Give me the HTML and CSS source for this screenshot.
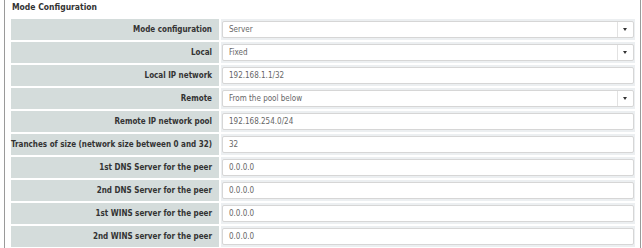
FILE: index.html
```html
<!DOCTYPE html>
<html lang="en">

<head>
    <meta charset="UTF-8">
    <title>Mode Configuration</title>
    <link rel="stylesheet" href="styles.css">
</head>

<body>
    <div class="panel">
        <h3>Mode Configuration</h3>
        <table class="config">
            <tr>
                <th>Mode configuration</th>
                <td><div class="select"><span>Server</span><b class="caret"></b></div></td>
            </tr>
            <tr>
                <th>Local</th>
                <td><div class="select"><span>Fixed</span><b class="caret"></b></div></td>
            </tr>
            <tr>
                <th>Local IP network</th>
                <td><div class="field">192.168.1.1/32</div></td>
            </tr>
            <tr>
                <th>Remote</th>
                <td><div class="select"><span>From the pool below</span><b class="caret"></b></div></td>
            </tr>
            <tr>
                <th>Remote IP network pool</th>
                <td><div class="field">192.168.254.0/24</div></td>
            </tr>
            <tr>
                <th>Tranches of size (network size between 0 and 32)</th>
                <td><div class="field">32</div></td>
            </tr>
            <tr>
                <th>1st DNS Server for the peer</th>
                <td><div class="field">0.0.0.0</div></td>
            </tr>
            <tr>
                <th>2nd DNS Server for the peer</th>
                <td><div class="field">0.0.0.0</div></td>
            </tr>
            <tr>
                <th>1st WINS server for the peer</th>
                <td><div class="field">0.0.0.0</div></td>
            </tr>
            <tr>
                <th>2nd WINS server for the peer</th>
                <td><div class="field">0.0.0.0</div></td>
            </tr>
        </table>
    </div>
</body>

</html>
```

FILE: styles.css
```css
body {
    margin: 0;
    padding: 0 1px 0 4px;
    font-family: "DejaVu Sans Condensed", "DejaVu Sans", sans-serif;
    font-size: 8px;
    color: #333;
    background: #fff;
}

.panel {
    border-left: 1px solid #9a9a9a;
    border-right: 1px solid #9a9a9a;
    padding: 0 3px 0 4px;
    height: 248px;
    box-sizing: border-box;
}

h3 {
    margin: 0;
    padding: 2px 0 0 3px;
    height: 14.5px;
    font-size: 8.5px;
    font-weight: bold;
    line-height: 10px;
    color: #333;
}

.config {
    width: 100%;
    border-collapse: separate;
    border-spacing: 2px;
}

.config th {
    width: 201px;
    height: 20.8px;
    padding: 0 7px 0 0;
    background-color: #d4dcdb;
    text-align: right;
    font-weight: bold;
    white-space: nowrap;
    color: #333;
}

.config td {
    padding: 2px 1px;
    background-color: #eceff1;
}

.field,
.select {
    height: 15px;
    line-height: 15px;
    border: 1px solid #d6d6d6;
    border-radius: 2px;
    background: #fff;
    padding: 0 6px;
    color: #666;
}

.select {
    display: flex;
    padding-right: 0;
}

.select span {
    flex: 1;
}

.caret {
    width: 15px;
    border-left: 1px solid #e2e2e2;
    position: relative;
}

.caret::after {
    content: "";
    position: absolute;
    left: 5px;
    top: 6px;
    border-left: 2.5px solid transparent;
    border-right: 2.5px solid transparent;
    border-top: 3px solid #333;
}
```
